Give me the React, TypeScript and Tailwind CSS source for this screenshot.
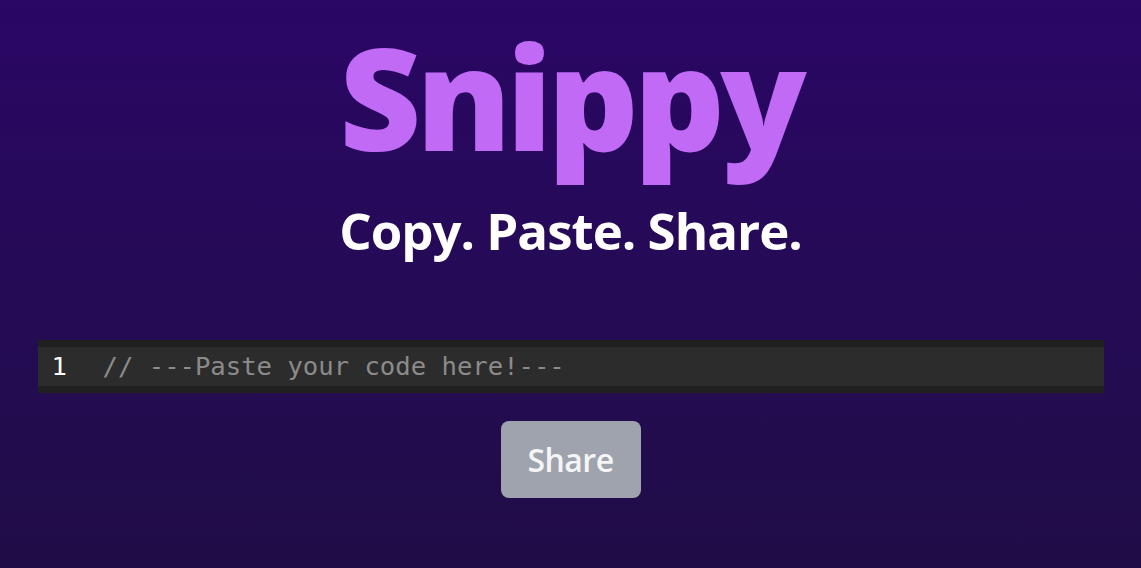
export default function App() {
  return (
    <div
      className="min-h-[568px] w-full bg-gradient-to-b from-[#2a0665] to-[#200d47] flex flex-col items-center"
      style={{ fontFamily: '"Open Sans", "Noto Sans", sans-serif' }}
    >
      {/* Header */}
      <h1 className="mt-[16px] text-[142px] leading-[160px] font-extrabold tracking-[-5px] text-[#c06af5]">
        Snippy
      </h1>
      <h2 className="mt-[24px] text-[51px] leading-[60px] font-bold tracking-[-1px] text-white">
        Copy. Paste. Share.
      </h2>

      {/* Editor */}
      <div className="mt-[80px] w-[1066px] bg-[#202020] py-[7px]">
        <div className="flex items-center h-[39px] bg-[#2c2c2c] font-['DejaVu_Sans_Mono',monospace] text-[25.6px]">
          <span className="w-[65px] pl-[14px] text-white">1</span>
          <span className="text-[#8b8b8b]">// ---Paste your code here!---</span>
        </div>
      </div>

      {/* Action */}
      <button className="mt-[28px] w-[140px] h-[77px] rounded-lg bg-[#9ea3ad] text-[32px] text-[#f5f5f5] font-semibold tracking-[-0.5px]">
        Share
      </button>
    </div>
  );
}
